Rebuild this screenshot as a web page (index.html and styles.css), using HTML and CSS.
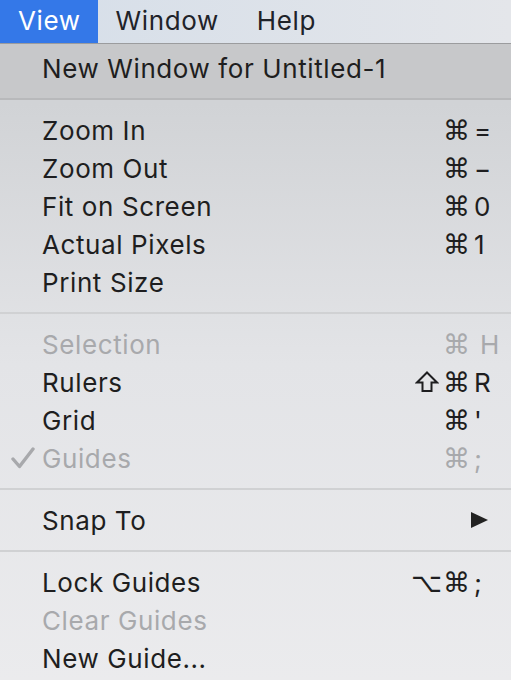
FILE: index.html
```html
<!DOCTYPE html>
<html>
<head>
<meta charset="utf-8">
<link rel="stylesheet" href="styles.css">
</head>
<body>
<div class="menubar">
  <span class="mb-item active">View</span>
  <span class="mb-item">Window</span>
  <span class="mb-item">Help</span>
</div>
<div class="menu">
  <div class="section top">
    <div class="row"><span class="label">New Window for Untitled-1</span></div>
  </div>
  <div class="sep dark"></div>
  <div class="section">
    <div class="row"><span class="label">Zoom In</span><span class="mods">⌘</span><span class="key">=</span></div>
    <div class="row"><span class="label">Zoom Out</span><span class="mods">⌘</span><span class="key">−</span></div>
    <div class="row"><span class="label">Fit on Screen</span><span class="mods">⌘</span><span class="key">0</span></div>
    <div class="row"><span class="label">Actual Pixels</span><span class="mods">⌘</span><span class="key">1</span></div>
    <div class="row"><span class="label">Print Size</span></div>
  </div>
  <div class="sep"></div>
  <div class="section">
    <div class="row disabled"><span class="label">Selection</span><span class="mods">⌘</span><span class="key key-h">H</span></div>
    <div class="row"><span class="label">Rulers</span><svg class="shift" width="24" height="22" viewBox="0 0 24 22"><path d="M12 1.5 L22 11.5 L16.5 11.5 L16.5 20 L7.5 20 L7.5 11.5 L2 11.5 Z" fill="none" stroke="currentColor" stroke-width="2" stroke-linejoin="miter"/></svg><span class="mods">⌘</span><span class="key">R</span></div>
    <div class="row"><span class="label">Grid</span><span class="mods">⌘</span><span class="key">'</span></div>
    <div class="row disabled"><svg class="check" width="24" height="22" viewBox="0 0 24 22"><path d="M2 12 L8.5 19.5 L22 2" fill="none" stroke="currentColor" stroke-width="3.4" stroke-linecap="round" stroke-linejoin="round"/></svg><span class="label">Guides</span><span class="mods">⌘</span><span class="key">;</span></div>
  </div>
  <div class="sep"></div>
  <div class="section">
    <div class="row"><span class="label">Snap To</span><span class="arrow"></span></div>
  </div>
  <div class="sep"></div>
  <div class="section">
    <div class="row"><span class="label">Lock Guides</span><span class="mods">⌥⌘</span><span class="key">;</span></div>
    <div class="row disabled"><span class="label">Clear Guides</span></div>
    <div class="row"><span class="label">New Guide...</span></div>
  </div>
</div>
</body>
</html>
```

FILE: styles.css
```css
html, body {
  margin: 0;
  padding: 0;
}
body {
  width: 511px;
  height: 680px;
  overflow: hidden;
  font-family: "Inter", "DejaVu Sans", sans-serif;
  font-size: 26px;
  letter-spacing: 0.6px;
  color: #1e1e20;
  background: #ebebed;
}
.menubar {
  height: 43px;
  display: flex;
  align-items: stretch;
  background: linear-gradient(to right, #d5dee9, #e4e6ea);
  border-bottom: 1px solid #9b9c9e;
}
.mb-item {
  display: flex;
  align-items: center;
  padding: 0 20px 2px 18px;
  color: #1f2329;
}
.mb-item.active {
  background: #3478e8;
  color: #fff;
  padding-right: 17px;
}
.menu {
  background: linear-gradient(to bottom, #d1d3d6 60px, #e3e4e7 320px, #ececee 680px);
}
.section.top {
  background: #c7c8ca;
  padding-top: 5px;
}
.section.top + .sep {
  margin-top: 0;
  border-top: 11px solid #c7c8ca;
}
.sep {
  height: 2px;
  margin: 11px 0;
  background: #d0d1d3;
}
.sep.dark {
  background: #b8b9bb;
}
.row {
  position: relative;
  height: 38px;
  display: flex;
  align-items: center;
  padding-left: 42px;
}
.label {
  flex: 1;
  white-space: nowrap;
}
.mods {
  font-family: "DejaVu Sans", sans-serif;
  font-size: 27px;
  letter-spacing: 1px;
  text-align: right;
  margin-right: 3px;
}
.shift {
  margin-right: 4px;
  margin-top: -1px;
}
.key {
  width: 37px;
  text-align: left;
  letter-spacing: 0;
}
.key-h {
  padding-left: 6px;
  width: 31px;
}
.disabled {
  color: #a8a9ac;
}
.check {
  position: absolute;
  left: 11px;
  top: 50%;
  transform: translateY(-50%);
  color: #a8a9ac;
}
.arrow {
  width: 0;
  height: 0;
  border-top: 8px solid transparent;
  border-bottom: 8px solid transparent;
  border-left: 17px solid #222;
  margin-right: 23px;
}
```
